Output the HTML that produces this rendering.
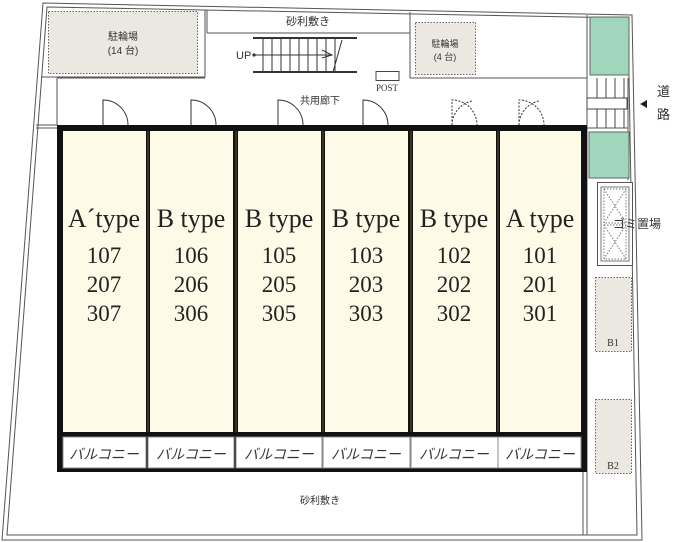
<!DOCTYPE html>
<html><head><meta charset="utf-8"><style>
body{margin:0;background:#fff;}
svg{display:block;font-family:"Liberation Serif","Noto Serif CJK SC",serif;}
.j{font-family:"Liberation Sans","Noto Sans CJK JP",sans-serif;}
</style></head><body>
<svg width="673" height="542" viewBox="0 0 673 542" xmlns="http://www.w3.org/2000/svg">
<g fill="none" stroke="#555" stroke-width="1">
<polygon points="43,3 632,15 642,540 2,540"/>
<polygon points="47,7 628,18 637,535 7,535"/>
<polyline points="41,77 205,77 205,10"/>
<line x1="207" y1="10" x2="207" y2="33"/>
<line x1="207" y1="33" x2="410" y2="33"/>
<line x1="410" y1="12" x2="410" y2="78"/>
<line x1="410" y1="78" x2="587" y2="78"/>
<line x1="57" y1="78" x2="57" y2="125"/>
<line x1="57" y1="78" x2="205" y2="78"/>
<line x1="36" y1="125" x2="57" y2="125"/>
<line x1="36" y1="128" x2="57" y2="128"/>
<line x1="587" y1="15" x2="587" y2="535"/>
<line x1="583" y1="472" x2="583" y2="535"/>
<line x1="628" y1="78" x2="628" y2="180"/>
<line x1="587" y1="128" x2="628" y2="128"/>
</g>
<rect x="48.5" y="11.5" width="149" height="62" fill="#ebe8e1" stroke="#666" stroke-dasharray="1.5,1.5"/>
<text x="123" y="40" font-size="10" text-anchor="middle" fill="#333" class="j">駐輪場</text>
<text x="123" y="54" font-size="10" text-anchor="middle" fill="#333" class="j">(14 台)</text>
<text x="308" y="25" font-size="11" text-anchor="middle" fill="#333" class="j">砂利敷き</text>
<g stroke="#333" stroke-width="1" fill="none">
<line x1="253" y1="38" x2="357" y2="38" stroke-width="2"/>
<line x1="253" y1="72" x2="357" y2="72" stroke-width="2"/>
<path d="M263 38V72M272 38V72M281 38V72M290 38V72M299 38V72M308 38V72M317 38V72M326 38V72M335 38V72"/>
<line x1="255" y1="55" x2="332" y2="55"/>
<path d="M322 50L332 55L322 58"/>
<line x1="333" y1="72" x2="342" y2="40"/>
</g>
<circle cx="254" cy="55" r="1.6" fill="#333"/>
<text x="236" y="59" font-size="11" fill="#333" class="j">UP</text>
<rect x="376" y="71.5" width="23" height="9" fill="#fff" stroke="#444"/>
<text x="387" y="91" font-size="9" text-anchor="middle" fill="#333">POST</text>
<rect x="415.5" y="22.5" width="60" height="52" fill="#ebe8e1" stroke="#666" stroke-dasharray="1.5,1.5"/>
<text x="445" y="47" font-size="9" text-anchor="middle" fill="#333" class="j">駐輪場</text>
<text x="445" y="60" font-size="9" text-anchor="middle" fill="#333" class="j">(4 台)</text>
<rect x="590" y="17" width="39" height="58" fill="#9fd6bc" stroke="#666"/>
<rect x="589" y="132" width="40" height="46" fill="#9fd6bc" stroke="#666"/>
<g stroke="#444" fill="none">
<path d="M597 78V128M606 78V128M615 78V128M624 78V128"/>
<rect x="587" y="98" width="40" height="11" fill="#fff"/>
</g>
<text x="320" y="104" font-size="10" text-anchor="middle" fill="#333" class="j">共用廊下</text>
<g stroke="#333" fill="none">
<path d="M103 125V100A25 25 0 0 1 128 125"/>
<path d="M191 125V100A25 25 0 0 1 216 125"/>
<path d="M278 125V100A25 25 0 0 1 303 125"/>
<path d="M363 125V100A25 25 0 0 1 388 125"/>
<path d="M452 125V100A25 25 0 0 1 477 125M452 125A25 25 0 0 1 472 101" stroke-dasharray="2,1.5"/>
<path d="M519 125V100A25 25 0 0 1 544 125M519 125A25 25 0 0 1 539 101" stroke-dasharray="2,1.5"/>
</g>
<text x="657" y="96" font-size="13" fill="#333" class="j">道</text>
<text x="657" y="119" font-size="13" fill="#333" class="j">路</text>
<path d="M640 104L647 100V108Z" fill="#222"/>
<rect x="597.5" y="182.5" width="35" height="83" fill="#fff" stroke="#555"/>
<rect x="601" y="187" width="28" height="74" fill="#fff" stroke="#777"/>
<g stroke="#777" stroke-dasharray="1.5,1.5" fill="none">
<rect x="604" y="189" width="22" height="34"/><path d="M604 189L626 223M626 189L604 223"/>
<rect x="604" y="225" width="22" height="34"/><path d="M604 225L626 259M626 225L604 259"/>
</g>
<text x="637" y="228" font-size="12" text-anchor="middle" fill="#333" class="j">ゴミ置場</text>
<rect x="595.5" y="277.5" width="36" height="74" fill="#ebe8e1" stroke="#666" stroke-dasharray="1.5,1.5"/>
<text x="613" y="346" font-size="10" text-anchor="middle" fill="#333">B1</text>
<rect x="595.5" y="399.5" width="36" height="74" fill="#ebe8e1" stroke="#666" stroke-dasharray="1.5,1.5"/>
<text x="613" y="469" font-size="10" text-anchor="middle" fill="#333">B2</text>
<rect x="57" y="125" width="530" height="347" fill="#111"/>
<g fill="#fdfbe8">
<rect x="63" y="131" width="83" height="301"/>
<rect x="150" y="131" width="83" height="301"/>
<rect x="238" y="131" width="83" height="301"/>
<rect x="325" y="131" width="83" height="301"/>
<rect x="413" y="131" width="83" height="301"/>
<rect x="500" y="131" width="81" height="301"/>
</g>
<g stroke="#3a3520" stroke-width="2"><path d="M148 131V432M236 131V432M323 131V432M411 131V432M498 131V432"/></g>
<g fill="#fff" stroke="#888">
<rect x="63" y="437" width="83" height="31"/>
<rect x="148" y="437" width="86" height="31"/>
<rect x="236" y="437" width="86" height="31"/>
<rect x="323" y="437" width="87" height="31"/>
<rect x="411" y="437" width="87" height="31"/>
<rect x="498" y="437" width="83" height="31"/>
</g>
<g font-size="14" text-anchor="middle" fill="#333" class="j" font-style="italic">
<text x="104" y="459">バルコニー</text><text x="191" y="459">バルコニー</text>
<text x="279" y="459">バルコニー</text><text x="366" y="459">バルコニー</text>
<text x="454" y="459">バルコニー</text><text x="540" y="459">バルコニー</text>
</g>
<g text-anchor="middle" fill="#222">
<g font-size="26">
<text x="104" y="227">A´type</text><text x="191" y="227">B type</text><text x="279" y="227">B type</text>
<text x="366" y="227">B type</text><text x="454" y="227">B type</text><text x="540" y="227">A type</text>
</g>
<g font-size="23">
<text x="104" y="263">107</text><text x="191" y="263">106</text><text x="279" y="263">105</text><text x="366" y="263">103</text><text x="454" y="263">102</text><text x="540" y="263">101</text>
<text x="104" y="292">207</text><text x="191" y="292">206</text><text x="279" y="292">205</text><text x="366" y="292">203</text><text x="454" y="292">202</text><text x="540" y="292">201</text>
<text x="104" y="321">307</text><text x="191" y="321">306</text><text x="279" y="321">305</text><text x="366" y="321">303</text><text x="454" y="321">302</text><text x="540" y="321">301</text>
</g>
</g>
<text x="320" y="504" font-size="10" text-anchor="middle" fill="#333" class="j">砂利敷き</text>
</svg>
</body></html>
